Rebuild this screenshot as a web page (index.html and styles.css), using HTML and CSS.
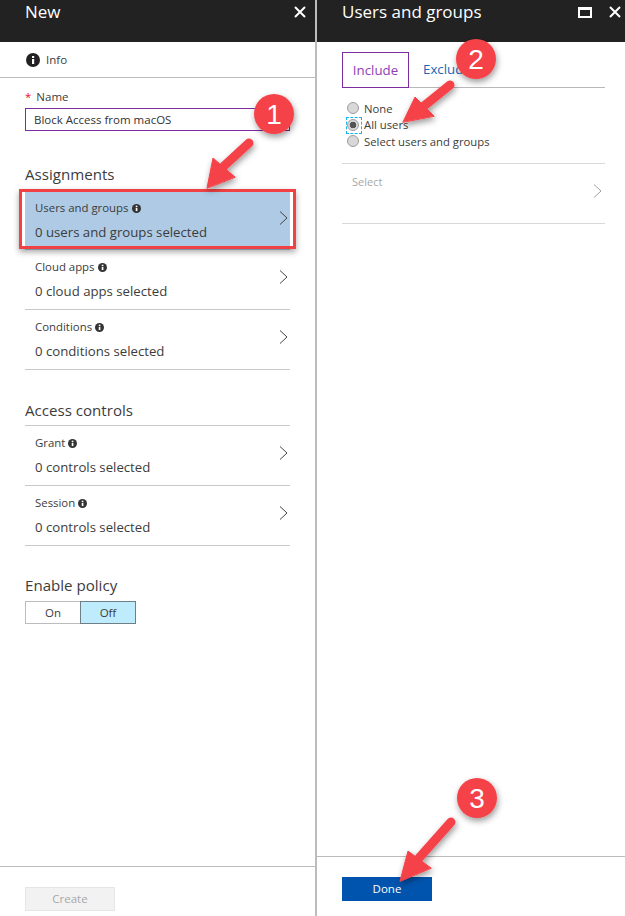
FILE: index.html
```html
<!DOCTYPE html>
<html lang="en">
<head>
<meta charset="utf-8">
<title>New policy</title>
<link rel="stylesheet" href="styles.css">
</head>
<body>
<div class="app">
  <section class="blade blade-left">
    <header class="head">
      <h1 class="title">New</h1>
      <div class="controls">
        <svg class="ctl" width="12" height="12" viewBox="0 0 12 12"><path d="M1 1 11 11M11 1 1 11" class="ctl-line"/></svg>
      </div>
    </header>
    <div class="info">
      <svg class="info-icon" width="14" height="14" viewBox="0 0 14 14"><circle cx="7" cy="7" r="7" fill="#222"/><rect x="6" y="6" width="2.2" height="5" fill="#fff"/><rect x="6" y="3" width="2.2" height="2" fill="#fff"/></svg>
      <span>Info</span>
    </div>
    <div class="content">
      <label class="name-label"><span class="req">*</span>Name</label>
      <div class="name-input">Block Access from macOS</div>

      <h2 class="section first">Assignments</h2>
      <div class="rows">
        <div class="row selected">
          <div class="row-text">
            <div class="row-label">Users and groups <svg class="dot" width="9" height="9" viewBox="0 0 14 14"><circle cx="7" cy="7" r="7" fill="#333"/><rect x="5.8" y="6" width="2.6" height="5" fill="#fff"/><rect x="5.8" y="2.6" width="2.6" height="2.2" fill="#fff"/></svg></div>
            <div class="row-value">0 users and groups selected</div>
          </div>
          <svg class="chev" width="9" height="14" viewBox="0 0 9 14"><path d="M1 .5 8 7 1 13.5"/></svg>
        </div>
        <div class="row">
          <div class="row-text">
            <div class="row-label">Cloud apps <svg class="dot" width="9" height="9" viewBox="0 0 14 14"><circle cx="7" cy="7" r="7" fill="#333"/><rect x="5.8" y="6" width="2.6" height="5" fill="#fff"/><rect x="5.8" y="2.6" width="2.6" height="2.2" fill="#fff"/></svg></div>
            <div class="row-value">0 cloud apps selected</div>
          </div>
          <svg class="chev" width="9" height="14" viewBox="0 0 9 14"><path d="M1 .5 8 7 1 13.5"/></svg>
        </div>
        <div class="row">
          <div class="row-text">
            <div class="row-label">Conditions <svg class="dot" width="9" height="9" viewBox="0 0 14 14"><circle cx="7" cy="7" r="7" fill="#333"/><rect x="5.8" y="6" width="2.6" height="5" fill="#fff"/><rect x="5.8" y="2.6" width="2.6" height="2.2" fill="#fff"/></svg></div>
            <div class="row-value">0 conditions selected</div>
          </div>
          <svg class="chev" width="9" height="14" viewBox="0 0 9 14"><path d="M1 .5 8 7 1 13.5"/></svg>
        </div>
      </div>

      <h2 class="section second">Access controls</h2>
      <div class="rows ruled">
        <div class="row">
          <div class="row-text">
            <div class="row-label">Grant <svg class="dot" width="9" height="9" viewBox="0 0 14 14"><circle cx="7" cy="7" r="7" fill="#333"/><rect x="5.8" y="6" width="2.6" height="5" fill="#fff"/><rect x="5.8" y="2.6" width="2.6" height="2.2" fill="#fff"/></svg></div>
            <div class="row-value">0 controls selected</div>
          </div>
          <svg class="chev" width="9" height="14" viewBox="0 0 9 14"><path d="M1 .5 8 7 1 13.5"/></svg>
        </div>
        <div class="row">
          <div class="row-text">
            <div class="row-label">Session <svg class="dot" width="9" height="9" viewBox="0 0 14 14"><circle cx="7" cy="7" r="7" fill="#333"/><rect x="5.8" y="6" width="2.6" height="5" fill="#fff"/><rect x="5.8" y="2.6" width="2.6" height="2.2" fill="#fff"/></svg></div>
            <div class="row-value">0 controls selected</div>
          </div>
          <svg class="chev" width="9" height="14" viewBox="0 0 9 14"><path d="M1 .5 8 7 1 13.5"/></svg>
        </div>
      </div>

      <h2 class="section third">Enable policy</h2>
      <div class="toggle">
        <span class="toggle-on">On</span>
        <span class="toggle-off">Off</span>
      </div>
    </div>
    <footer class="foot foot-left">
      <div class="btn-create">Create</div>
    </footer>
  </section>

  <section class="blade blade-right">
    <header class="head">
      <h1 class="title">Users and groups</h1>
      <div class="controls">
        <svg class="ctl" width="14" height="11" viewBox="0 0 14 11"><path d="M0 0H14V11H0ZM2 3V9H12V3Z" fill="#fff" fill-rule="evenodd"/></svg>
        <svg class="ctl" width="12" height="12" viewBox="0 0 12 12"><path d="M1 1 11 11M11 1 1 11" class="ctl-line"/></svg>
      </div>
    </header>
    <div class="content content-right">
      <div class="tabs">
        <span class="tab active">Include</span>
        <span class="tab">Exclude</span>
      </div>
      <div class="radios">
        <div class="radio-row"><span class="radio"></span>None</div>
        <div class="radio-row"><span class="radio checked"></span>All users</div>
        <div class="radio-row"><span class="radio"></span>Select users and groups</div>
      </div>
      <div class="select-row">
        <span class="select-label">Select</span>
        <svg class="chev chev-light" width="9" height="14" viewBox="0 0 9 14"><path d="M1 .5 8 7 1 13.5"/></svg>
      </div>
    </div>
    <footer class="foot foot-right">
      <div class="btn-done">Done</div>
    </footer>
  </section>
</div>

<div class="callout-box"></div>
<svg class="annot" width="625" height="916" viewBox="0 0 625 916">
  <defs>
    <filter id="sh" x="-30%" y="-30%" width="160%" height="160%"><feDropShadow dx="1" dy="3" stdDeviation="3" flood-color="#000" flood-opacity=".4"/></filter>
  </defs>
  <g filter="url(#sh)" class="arrow">
    <path d="M249 143 224 166"/>
    <path d="M207 188 213 158 235 177Z" class="head-fill"/>
  </g>
  <g filter="url(#sh)" class="arrow">
    <path d="M450 85 424 106"/>
    <path d="M403 122 415 97 434 116Z" class="head-fill"/>
  </g>
  <g filter="url(#sh)" class="arrow">
    <path d="M451 822 419 858"/>
    <path d="M400 881 408 851 431 868Z" class="head-fill"/>
  </g>
  <g filter="url(#sh)"><circle cx="274" cy="114" r="20" class="badge"/></g>
  <text x="274" y="124" class="badge-text">1</text>
  <g filter="url(#sh)"><circle cx="476" cy="59" r="20" class="badge"/></g>
  <text x="476" y="69" class="badge-text">2</text>
  <g filter="url(#sh)"><circle cx="477" cy="798" r="20" class="badge"/></g>
  <text x="477" y="808" class="badge-text">3</text>
</svg>
</body>
</html>
```
FILE: styles.css
```css
* { box-sizing: border-box; }
html, body { margin: 0; padding: 0; background: #fff; }
body { font-family: "Open Sans", "Noto Sans", sans-serif; color: #3c3c3c; width: 625px; height: 916px; overflow: hidden; position: relative; }
.app { display: flex; width: 625px; height: 916px; }
.blade { display: flex; flex-direction: column; height: 916px; }
.blade-left { width: 317px; border-right: 2px solid #bcbcbc; }
.blade-right { flex: 1; min-width: 0; }
.head { height: 42px; flex: none; background: #222; color: #fff; display: flex; justify-content: space-between; padding: 0 4px 18px 25px; align-items: center; }
.title { margin: 0; font-size: 17px; font-weight: 400; line-height: 24px; }
.controls { display: flex; align-items: center; gap: 17px; padding-right: 5px; }
.blade-right .controls { padding-right: 0; }
.ctl { display: block; }
.ctl-line { stroke: #fff; stroke-width: 2; fill: none; }
.info { height: 36px; flex: none; border-bottom: 1px solid #bcbcbc; display: flex; align-items: center; gap: 6px; padding-left: 26px; font-size: 11.5px; }
.content { padding: 0 25px; flex: 1; min-height: 0; }
.content-right { padding-right: 20px; }
.name-label { display: block; font-size: 11.5px; line-height: 16px; margin-top: 11px; }
.req { color: #e81123; margin-right: 5px; }
.name-input { height: 23px; margin-top: 3px; border: 1px solid #7d2b9f; font-size: 11.5px; line-height: 21px; padding-left: 8px; color: #333; }
.section { margin: 0; font-size: 15.1px; font-weight: 400; line-height: 20px; color: #3c3c3c; }
.section.first { margin-top: 33px; }
.section.second { margin-top: 30px; }
.section.third { margin-top: 29px; }
.rows { margin-top: 8px; }
.rows.ruled { margin-top: 5px; border-top: 1px solid #c8c8c8; }
.row { height: 60px; border-bottom: 1px solid #c8c8c8; padding: 0 2px 0 10px; display: flex; align-items: center; justify-content: space-between; }
.row.selected { background: #aecae4; border-bottom-color: #aecae4; height: 58px; }
.row-label { font-size: 11.4px; line-height: 16px; display: flex; align-items: center; gap: 3px; margin-bottom: 7px; }
.row-value { font-size: 13.2px; line-height: 18px; }
.dot { display: block; }
.chev { fill: none; flex: none; }
.row .chev { margin-bottom: 6px; }
.chev path { stroke: #444; stroke-width: 1; }
.chev-light path { stroke: #a0a0a0; }
.toggle { display: flex; width: 111px; height: 23px; margin-top: 6px; font-size: 11.5px; line-height: 21px; text-align: center; }
.toggle-on { width: 55px; border: 1px solid #bcbcbc; border-right: 0; }
.toggle-off { width: 56px; border: 1px solid #6e7f87; background: #bfecfd; }
.foot { flex: none; border-top: 1px solid #bcbcbc; padding-left: 25px; }
.foot-left { height: 50px; padding-top: 20px; }
.foot-right { height: 60px; padding-top: 20px; }
.btn-create { width: 90px; height: 24px; background: #f2f2f2; border: 1px solid #e6e6e6; color: #a8a8a8; font-size: 11.5px; line-height: 22px; text-align: center; }
.btn-done { width: 90px; height: 24px; background: #0054ae; color: #fff; font-size: 11.5px; font-weight: 500; line-height: 24px; text-align: center; }
.tabs { margin-top: 10px; height: 36px; border-bottom: 1px solid #b8b8b8; display: flex; font-size: 13.3px; }
.tab { height: 36px; line-height: 34px; padding: 0 14px; color: #1b65b5; }
.tab.active { width: 67px; padding: 0; text-align: center; color: #8e3fb5; border: 1px solid #7d2b9f; }
.radios { margin-top: 12px; padding-left: 5px; padding-bottom: 13px; border-bottom: 1px solid #d8d8d8; font-size: 11.3px; }
.radio-row { display: flex; align-items: center; gap: 5px; height: 16.5px; }
.radio { width: 12px; height: 12px; border-radius: 50%; background: #d8d8d8; border: 1px solid #9e9e9e; flex: none; position: relative; }
.radio.checked { background: radial-gradient(circle, #555 0 3px, #d8d8d8 3.6px); }
.radio.checked::before { content: ""; position: absolute; left: -2px; top: -3px; width: 14px; height: 15px; border: 1px dashed #19b5e8; }
.select-row { height: 60px; border-bottom: 1px solid #d8d8d8; display: flex; justify-content: space-between; padding: 10px 3px 0 10px; font-size: 11px; color: #a8a8a8; }
.chev-light { margin-top: 10px; }
.callout-box { position: absolute; left: 19px; top: 189px; width: 277px; height: 60px; border: 3px solid #f04245; box-shadow: 0 3px 6px rgba(0,0,0,.35); }
.annot { position: absolute; left: 0; top: 0; pointer-events: none; }
.arrow path { stroke: #f5434a; stroke-width: 9; stroke-linecap: round; stroke-linejoin: round; fill: none; }
.arrow .head-fill { fill: #f5434a; stroke-width: 1; }
.badge { fill: #f5434a; }
.badge-text { fill: #fff; font-family: "Liberation Sans", Arial, sans-serif; font-size: 28px; text-anchor: middle; }
```
